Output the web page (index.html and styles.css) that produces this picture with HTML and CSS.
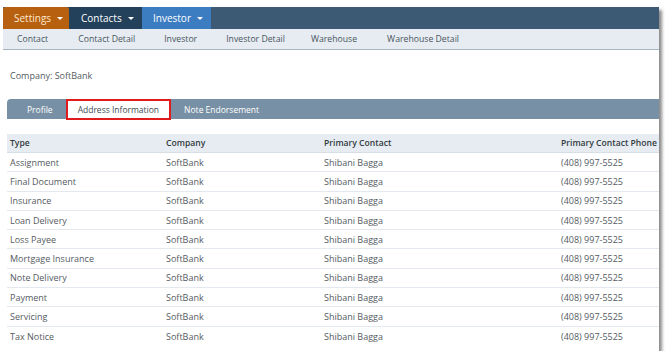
FILE: index.html
```html
<!DOCTYPE html>
<html>
<head>
<meta charset="utf-8">
<link rel="stylesheet" href="styles.css">
</head>
<body>
<div class="card">
  <div class="topnav">
    <div class="tnav settings">Settings <span class="caret"></span></div>
    <div class="tnav contacts">Contacts <span class="caret"></span></div>
    <div class="tnav investor">Investor <span class="caret"></span></div>
  </div>
  <div class="subnav">
    <span class="sub s1">Contact</span>
    <span class="sub s2">Contact Detail</span>
    <span class="sub s3">Investor</span>
    <span class="sub s4">Investor Detail</span>
    <span class="sub s5">Warehouse</span>
    <span class="sub s6">Warehouse Detail</span>
  </div>
  <div class="company">Company: SoftBank</div>
  <div class="tabs">
    <span class="tab t1">Profile</span>
    <span class="tab active">Address Information</span>
    <span class="tab t3">Note Endorsement</span>
  </div>
  <div class="table">
    <div class="row head"><span class="c1">Type</span><span class="c2">Company</span><span class="c3">Primary Contact</span><span class="c4">Primary Contact Phone</span></div>
    <div class="row"><span class="c1">Assignment</span><span class="c2">SoftBank</span><span class="c3">Shibani Bagga</span><span class="c4">(408) 997-5525</span></div>
    <div class="row"><span class="c1">Final Document</span><span class="c2">SoftBank</span><span class="c3">Shibani Bagga</span><span class="c4">(408) 997-5525</span></div>
    <div class="row"><span class="c1">Insurance</span><span class="c2">SoftBank</span><span class="c3">Shibani Bagga</span><span class="c4">(408) 997-5525</span></div>
    <div class="row"><span class="c1">Loan Delivery</span><span class="c2">SoftBank</span><span class="c3">Shibani Bagga</span><span class="c4">(408) 997-5525</span></div>
    <div class="row"><span class="c1">Loss Payee</span><span class="c2">SoftBank</span><span class="c3">Shibani Bagga</span><span class="c4">(408) 997-5525</span></div>
    <div class="row"><span class="c1">Mortgage Insurance</span><span class="c2">SoftBank</span><span class="c3">Shibani Bagga</span><span class="c4">(408) 997-5525</span></div>
    <div class="row"><span class="c1">Note Delivery</span><span class="c2">SoftBank</span><span class="c3">Shibani Bagga</span><span class="c4">(408) 997-5525</span></div>
    <div class="row"><span class="c1">Payment</span><span class="c2">SoftBank</span><span class="c3">Shibani Bagga</span><span class="c4">(408) 997-5525</span></div>
    <div class="row"><span class="c1">Servicing</span><span class="c2">SoftBank</span><span class="c3">Shibani Bagga</span><span class="c4">(408) 997-5525</span></div>
    <div class="row last"><span class="c1">Tax Notice</span><span class="c2">SoftBank</span><span class="c3">Shibani Bagga</span><span class="c4">(408) 997-5525</span></div>
  </div>
</div>
</body>
</html>
```
FILE: styles.css
```css
html, body { margin: 0; padding: 0; background: #ffffff; }
body {
  font-family: "Open Sans", "Liberation Sans", sans-serif;
  font-size: 9px;
  color: #555b62;
}
.card {
  margin: 7px 0 0 3px;
  width: 656px;
  height: 344px;
  background: #fff;
  box-shadow: 3px 3px 3px rgba(0,0,0,0.45);
  display: flex;
  flex-direction: column;
}
.topnav {
  display: flex;
  height: 22px;
  background: #3d5a74;
}
.tnav {
  display: flex;
  align-items: center;
  color: #fff;
  font-size: 10px;
  padding-left: 11px;
  box-sizing: border-box;
  gap: 6px;
}
.settings { width: 66px; background: #b7600f; border-radius: 3px 3px 0 0; color: #fde8d2; }
.contacts { width: 73px; background: #24415c; padding-left: 12px; }
.investor { width: 69px; background: #3c7dc2; padding-left: 11px; }
.caret {
  width: 0; height: 0;
  border-left: 3px solid transparent;
  border-right: 3px solid transparent;
  border-top: 3px solid #fff;
  margin-top: 1px;
}
.subnav {
  height: 20px;
  background: #e6ecf2;
  border-bottom: 1px solid #a9b6c2;
  display: flex;
  align-items: center;
  color: #4a5560;
  font-size: 8.7px;
  white-space: nowrap;
}
.sub { display: inline-block; }
.s1 { margin-left: 14px; }
.s2 { margin-left: 30px; }
.s3 { margin-left: 29px; }
.s4 { margin-left: 29px; }
.s5 { margin-left: 26px; }
.s6 { margin-left: 30px; }
.company {
  margin: 20px 0 0 7px;
  height: 12px;
  line-height: 12px;
}
.tabs {
  margin: 17px 0 0 4px;
  height: 20px;
  background: #7790a5;
  border-radius: 4px 0 0 0;
  display: flex;
  align-items: stretch;
  color: #fff;
  font-size: 8.5px;
  white-space: nowrap;
}
.tab { display: flex; align-items: center; }
.t1 { padding: 0 13px 0 20px; }
.active {
  background: #fff;
  color: #444b52;
  border: 2px solid #e01b1b;
  padding: 0 10px 0 10px;
  box-sizing: border-box;
  height: 21px;
}
.t3 { padding-left: 13px; }
.table {
  margin: 15px 0 0 4px;
}
.row {
  display: flex;
  height: 19.3px;
  align-items: center;
  border-bottom: 1px solid #e3e9ef;
  box-sizing: border-box;
  white-space: nowrap;
  overflow: hidden;
}
.row.head {
  background: #e6ecf2;
  font-weight: 600;
  font-size: 8.6px;
  color: #333a40;
  height: 19px;
  border-bottom: 1px solid #d6dee6;
}
.row.last { border-bottom: none; }
.row span { flex-shrink: 0; }
.c1 { width: 156px; padding-left: 3px; }
.c2 { width: 158px; }
.c3 { width: 237px; }
```
